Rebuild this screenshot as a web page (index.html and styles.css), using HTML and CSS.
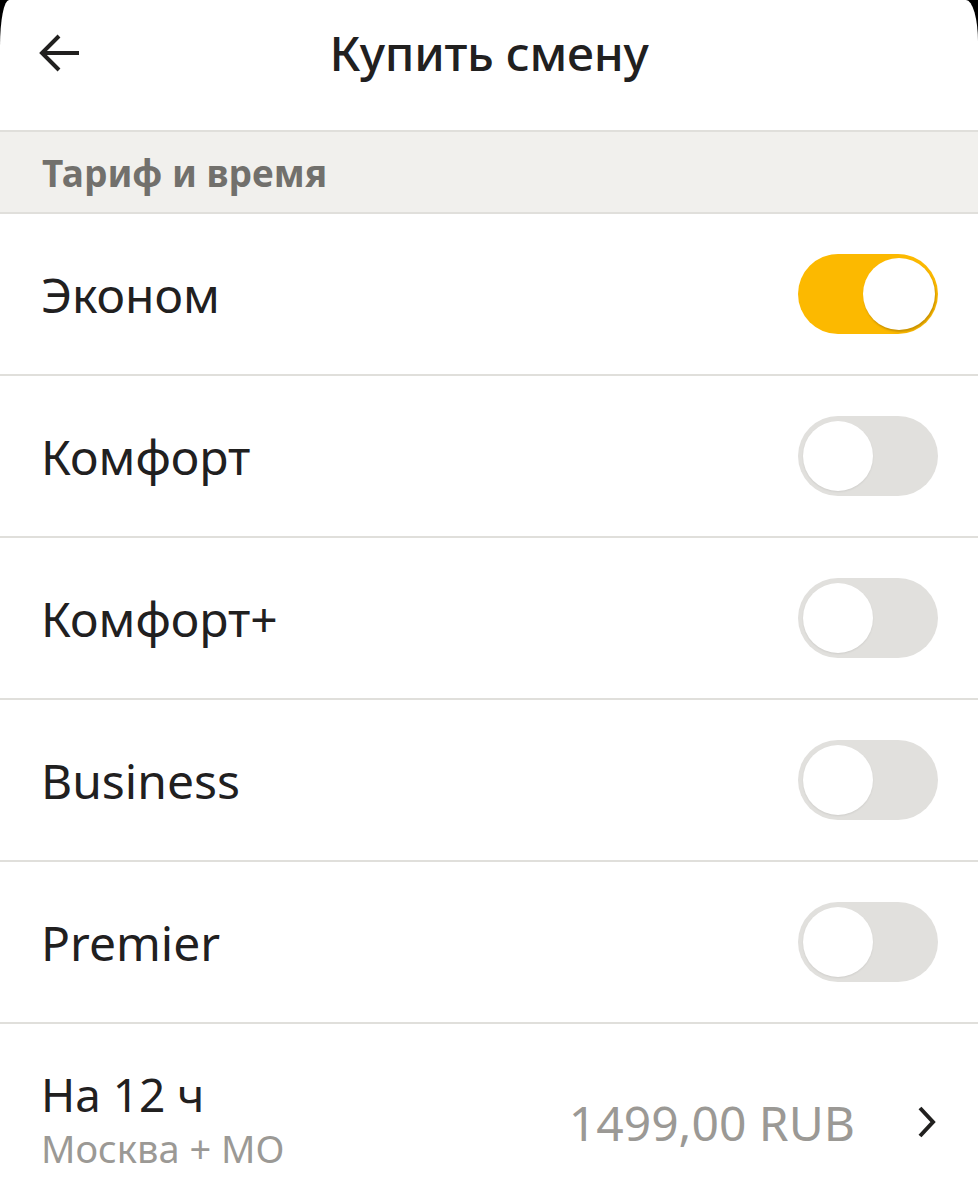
FILE: index.html
```html
<!DOCTYPE html>
<html lang="ru">
<head>
<meta charset="utf-8">
<title>Купить смену</title>
<link rel="stylesheet" href="styles.css">
</head>
<body>
<div class="screen">
  <header class="topbar">
    <button class="back" aria-label="Назад">
      <svg width="44" height="44" viewBox="0 0 44 44"><path d="M21 5 L4 22 L21 39 M4 22 H41" fill="none" stroke="#21201f" stroke-width="4" stroke-linecap="butt" stroke-linejoin="miter"/></svg>
    </button>
    <h1 class="title">Купить смену</h1>
  </header>
  <div class="section">Тариф и время</div>
  <ul class="list">
    <li class="row"><span class="label">Эконом</span><span class="toggle on"><span class="knob"></span></span></li>
    <li class="row"><span class="label">Комфорт</span><span class="toggle"><span class="knob"></span></span></li>
    <li class="row"><span class="label">Комфорт+</span><span class="toggle"><span class="knob"></span></span></li>
    <li class="row"><span class="label">Business</span><span class="toggle"><span class="knob"></span></span></li>
    <li class="row"><span class="label">Premier</span><span class="toggle"><span class="knob"></span></span></li>
    <li class="row shift">
      <div class="shift-info">
        <span class="label">На 12 ч</span>
        <span class="sub">Москва + МО</span>
      </div>
      <span class="price">1499,00 RUB</span>
      <svg class="chev" width="20" height="32" viewBox="0 0 20 32"><path d="M3 2 L16 16 L3 30" fill="none" stroke="#21201f" stroke-width="4"/></svg>
    </li>
  </ul>
</div>
</body>
</html>
```

FILE: styles.css
```css
html, body {
  margin: 0;
  padding: 0;
  background: #000;
}
body {
  font-family: "Noto Sans", "Open Sans", sans-serif;
  color: #21201f;
  width: 978px;
  height: 1200px;
  overflow: hidden;
}
.screen {
  background: #fff;
  border-top-left-radius: 9px 46px;
  border-top-right-radius: 12px 42px;
  height: 1200px;
  overflow: hidden;
}
.topbar {
  height: 130px;
  display: flex;
  align-items: center;
  position: relative;
  justify-content: center;
}
.back {
  position: absolute;
  left: 38px;
  top: 31px;
  border: 0;
  background: none;
  padding: 0;
  width: 44px;
  height: 44px;
}
.back svg { display: block; }
.title {
  margin: 0 0 26px 0;
  font-size: 48px;
  font-weight: 500;
  letter-spacing: -0.3px;
}
.section {
  border-top: 2px solid #e0dfdb;
  border-bottom: 2px solid #e0dfdb;
  background: #f1f0ed;
  height: 80px;
  box-sizing: content-box;
  display: flex;
  align-items: center;
  padding-left: 42px;
  font-size: 37px;
  font-weight: 700;
  color: #72706c;
}
.list {
  list-style: none;
  margin: 0;
  padding: 0;
}
.row {
  height: 160px;
  border-bottom: 2px solid #e0dfdb;
  display: flex;
  align-items: center;
  padding: 0 40px 0 41px;
}
.label {
  flex: 1;
  font-size: 48px;
  color: #21201f;
}
.toggle {
  width: 140px;
  height: 80px;
  border-radius: 40px;
  background: #e1e0dd;
  box-sizing: border-box;
  padding: 5px;
  display: flex;
  justify-content: flex-start;
}
.toggle .knob {
  width: 70px;
  height: 70px;
  border-radius: 50%;
  background: #fff;
  box-shadow: 0 1px 2px rgba(0,0,0,0.08);
}
.toggle.on {
  background: #fcb900;
  justify-content: flex-end;
  padding: 4px 3px;
}
.toggle.on .knob {
  width: 72px;
  height: 72px;
  box-shadow: 1px 2px 2px rgba(140,100,0,0.45);
}
.row.shift {
  border-bottom: 0;
  height: 196px;
  align-items: flex-start;
  padding-top: 42px;
  box-sizing: border-box;
}
.shift-info {
  flex: 1;
  display: flex;
  flex-direction: column;
}
.shift-info .label {
  font-size: 46px;
  line-height: 56px;
}
.sub {
  font-size: 38px;
  color: #9b9995;
  line-height: 52px;
}
.price {
  font-size: 48px;
  color: #9b9995;
  margin-top: 24px;
  margin-right: 62px;
}
.chev {
  margin-top: 40px;
  margin-right: 1px;
}
```
